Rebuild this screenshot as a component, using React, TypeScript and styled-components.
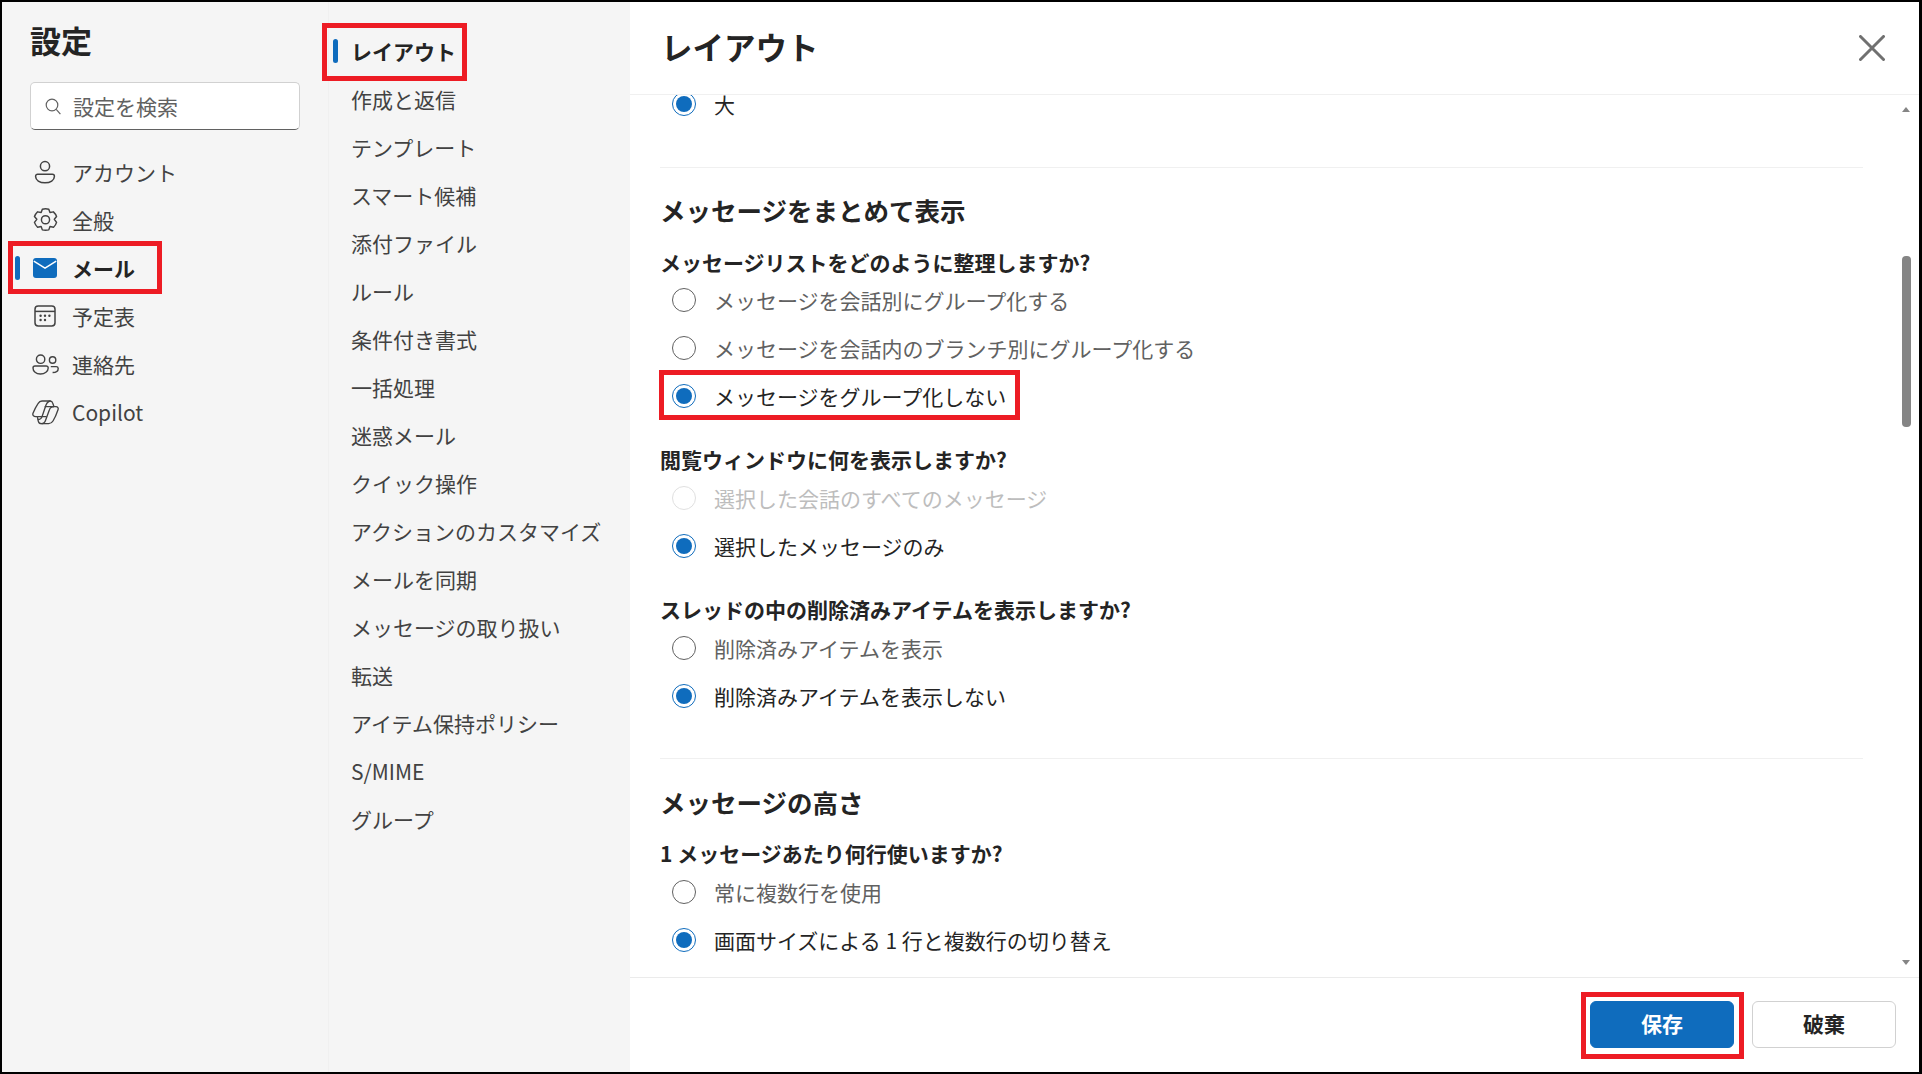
import React from "react";
import styled, { createGlobalStyle } from "styled-components";

const Global = createGlobalStyle`
  html, body { margin: 0; padding: 0; background: #fff; overflow: hidden; }
  * { box-sizing: border-box; }
`;

const Frame = styled.div`
  width: 1922px;
  height: 1074px;
  display: flex;
  border: solid #000;
  border-width: 2px 3px 2px 2px;
  font-family: "Noto Sans CJK JP", "Noto Sans", sans-serif;
  color: #242424;
  background: #fff;
  overflow: hidden;
`;

const SideColumn = styled.nav`
  width: 327px;
  flex: none;
  background: #f5f5f5;
  border-right: 1px solid #f0f0f0;
  padding-top: 18px;
`;

const PageTitle = styled.h1`
  margin: 0 0 0 28px;
  font-size: 31px;
  line-height: 40px;
  font-weight: 700;
`;

const SearchBox = styled.div`
  margin: 22px 0 19px 28px;
  width: 270px;
  height: 48px;
  display: flex;
  align-items: center;
  gap: 12px;
  padding-left: 14px;
  background: #fff;
  border: 1px solid #d1d1d1;
  border-bottom-color: #616161;
  border-radius: 5px;
  color: #616161;
  font-size: 21px;
`;

const NavRow = styled.div<{ $active?: boolean }>`
  position: relative;
  height: 48px;
  display: flex;
  align-items: center;
  padding: 0 0 2px 28px;
  font-size: 21px;
  color: ${(p) => (p.$active ? "#242424" : "#424242")};
  font-weight: ${(p) => (p.$active ? 700 : 400)};
`;

const IconSlot = styled.span`
  width: 30px;
  height: 30px;
  flex: none;
  display: flex;
  align-items: center;
  justify-content: center;
  margin-right: 12px;
`;

const ActiveBar = styled.span<{ $left: number }>`
  position: absolute;
  left: ${(p) => p.$left}px;
  top: 11px;
  width: 5px;
  height: 24px;
  border-radius: 3px;
  background: #0f6cbd;
`;

const Callout = styled.span<{ $l: number; $t: number; $w: number; $h: number }>`
  position: absolute;
  left: ${(p) => p.$l}px;
  top: ${(p) => p.$t}px;
  width: ${(p) => p.$w}px;
  height: ${(p) => p.$h}px;
  border: 5px solid #ed1c24;
  pointer-events: none;
`;

const SubColumn = styled.nav`
  width: 301px;
  flex: none;
  background: #f5f5f5;
  padding-top: 26px;
`;

const SubRow = styled.div<{ $active?: boolean }>`
  position: relative;
  height: 48px;
  display: flex;
  align-items: center;
  padding: 0 0 2px 22px;
  font-size: 21px;
  white-space: nowrap;
  color: ${(p) => (p.$active ? "#242424" : "#424242")};
  font-weight: ${(p) => (p.$active ? 700 : 400)};
`;

const Main = styled.main`
  flex: 1;
  min-width: 0;
  display: flex;
  flex-direction: column;
`;

const Header = styled.header`
  position: relative;
  z-index: 1;
  height: 93px;
  flex: none;
  display: flex;
  align-items: center;
  justify-content: space-between;
  padding: 0 34px 5px 31px;
  background: #fff;
  border-bottom: 1px solid #f0f0f0;
`;

const PanelTitle = styled.h2`
  margin: 0;
  font-size: 31.5px;
  line-height: 40px;
  font-weight: 700;
`;

const CloseButton = styled.button`
  padding: 0;
  margin-top: 5px;
  border: 0;
  background: none;
  width: 26px;
  height: 26px;
  display: flex;
`;

const ScrollRegion = styled.div`
  flex: 1;
  min-height: 0;
  display: flex;
`;

const ScrollContent = styled.div`
  flex: 1;
  min-width: 0;
  padding: 0 39px 0 30px;
`;

const Track = styled.div`
  width: 9px;
  flex: none;
  margin-right: 8px;
  display: flex;
  flex-direction: column;
  padding: 12px 0;
`;

const ArrowUp = styled.span`
  flex: none;
  width: 0;
  height: 0;
  border-left: 4.5px solid transparent;
  border-right: 4.5px solid transparent;
  border-bottom: 5px solid #858585;
`;

const ArrowDown = styled.span`
  flex: none;
  width: 0;
  height: 0;
  margin-top: auto;
  border-left: 4.5px solid transparent;
  border-right: 4.5px solid transparent;
  border-top: 5px solid #858585;
`;

const Thumb = styled.span`
  flex: none;
  margin-top: 144px;
  height: 171px;
  background: #858585;
  border-radius: 4px;
`;

const Divider = styled.hr<{ $top: number }>`
  margin: ${(p) => p.$top}px 0 0;
  border: 0;
  height: 1px;
  background: #f0f0f0;
`;

const SectionTitle = styled.h3<{ $top: number; $bottom: number }>`
  margin: ${(p) => p.$top}px 0 ${(p) => p.$bottom}px;
  font-size: 25.5px;
  line-height: 36px;
  font-weight: 700;
`;

const Question = styled.div<{ $gap?: number; $after?: number }>`
  margin: ${(p) => p.$gap ?? 0}px 0 ${(p) => p.$after ?? 0}px;
  font-size: 21px;
  line-height: 28px;
  font-weight: 700;
`;

type RadioState = "on" | "off" | "disabled";

const RadioRow = styled.div<{ $state: RadioState; $clipped?: boolean }>`
  position: relative;
  height: ${(p) => (p.$clipped ? 18 : 48)}px;
  line-height: ${(p) => (p.$clipped ? 18 : 20)}px;
  display: flex;
  align-items: center;
  gap: 18px;
  padding-left: 12px;
  font-size: 21px;
  color: ${(p) =>
    p.$state === "on" ? "#242424" : p.$state === "off" ? "#616161" : "#bdbdbd"};
`;

const RadioMark = styled.span<{ $state: RadioState }>`
  width: 24px;
  height: 24px;
  flex: none;
  border-radius: 50%;
  display: flex;
  align-items: center;
  justify-content: center;
  background: #fff;
  border: 1.4px solid
    ${(p) =>
      p.$state === "on" ? "#0f6cbd" : p.$state === "off" ? "#616161" : "#e0e0e0"};
  &::after {
    content: "";
    display: ${(p) => (p.$state === "on" ? "block" : "none")};
    width: 16px;
    height: 16px;
    border-radius: 50%;
    background: #0f6cbd;
  }
`;

const Footer = styled.footer`
  height: 95px;
  flex: none;
  display: flex;
  justify-content: flex-end;
  gap: 18px;
  padding: 23px 23px 0 0;
  border-top: 1px solid #ebebeb;
`;

const ActionButton = styled.button<{ $primary?: boolean }>`
  position: relative;
  width: 144px;
  height: 47px;
  padding: 0 0 3px;
  border-radius: 6px;
  font: 700 21px "Noto Sans CJK JP", sans-serif;
  color: ${(p) => (p.$primary ? "#fff" : "#242424")};
  background: ${(p) => (p.$primary ? "#0f6cbd" : "#fff")};
  border: 1px solid ${(p) => (p.$primary ? "#0f6cbd" : "#d1d1d1")};
`;

const Person = () => (
  <svg width="24" height="24" viewBox="0 0 24 24" fill="none" stroke="#424242" strokeWidth="1.5">
    <circle cx="12" cy="6.200" r="4.600" />
    <path d="M4.600 14.200h14.800a2 2 0 0 1 2 2v.4c0 3.600-4 6.200-9.400 6.200s-9.400-2.600-9.400-6.200v-.4a2 2 0 0 1 2-2z" />
  </svg>
);

const Gear = () => (
  <svg width="25" height="26" viewBox="2.500 3 19 18.400" fill="none" stroke="#424242" strokeWidth="1.100" strokeLinejoin="round">
    <path d="M12.200 1.600c.9 0 1.700.1 2.500.3l.9 2.500 2.600-.5c1.100 1 1.900 2.200 2.400 3.600l-1.700 2 1.700 2.400c-.4 1.400-1.200 2.700-2.300 3.700l-2.700-.6-.9 2.600c-.8.2-1.600.3-2.500.3s-1.700-.1-2.400-.3l-.9-2.600-2.700.6a9.400 9.400 0 0 1-2.400-3.700l1.800-2.300-1.800-2.100c.5-1.400 1.400-2.600 2.400-3.600l2.700.5.9-2.500c.7-.2 1.500-.3 2.400-.3z" transform="translate(-.2 2.100)" />
    <circle cx="12" cy="12" r="3.100" />
  </svg>
);

const Mail = () => (
  <svg width="24" height="20" viewBox="0 0 24 20">
    <rect width="24" height="20" rx="3" fill="#0f6cbd" />
    <path d="M.8 3.200 12 10.200l11.200-7" fill="none" stroke="#fff" strokeWidth="1.500" />
  </svg>
);

const Calendar = () => (
  <svg width="22" height="22" viewBox="0 0 22 22" fill="none" stroke="#424242" strokeWidth="1.500">
    <rect x="1" y="1" width="20" height="20" rx="3.200" />
    <path d="M1 6.400h20" />
    <g fill="#424242" stroke="none">
      <circle cx="6.600" cy="10.800" r="1.200" />
      <circle cx="11" cy="10.800" r="1.200" />
      <circle cx="15.400" cy="10.800" r="1.200" />
      <circle cx="6.600" cy="15" r="1.200" />
      <circle cx="11" cy="15" r="1.200" />
    </g>
  </svg>
);

const People = () => (
  <svg width="27" height="21" viewBox="0 0 27 21" fill="none" stroke="#424242" strokeWidth="1.400">
    <circle cx="8.600" cy="5.200" r="4.200" />
    <path d="M3 12h11.200a2 2 0 0 1 2 2c0 3.400-3.400 6-7.800 6S1 17.400 1 14a2 2 0 0 1 2-2z" />
    <circle cx="20.600" cy="6" r="3.200" />
    <path d="M18.800 12.600h5.400a2 2 0 0 1 2 1.800c0 2.400-2.200 4.100-5.600 4.100" />
  </svg>
);

const Copilot = () => (
  <svg width="27" height="25" viewBox="0 0 81 75" fill="none" stroke="#424242" strokeWidth="4" strokeLinejoin="round">
    <path d="M30 3H54c4 0 7 2 8 6l4 11h6c5 0 8 4 6 9-4 12-9 24-15 34-3 5-7 8-13 8H28c-5 0-8-3-9-7l-3-14H11c-6 0-10-5-8-10 4-10 9-20 15-29 3-5 7-8 12-8z" />
    <path d="M56 3c-7 0-11 5-14 12L30 50c-2 7-6 9-13 9" />
    <path d="M28 71c6 0 11-4 13-11L52 30c2-7 6-10 14-10" />
    <path d="M38 20h28M16 50h28" />
  </svg>
);

const SearchGlyph = () => (
  <svg width="16" height="17" viewBox="0 0 16 17" fill="none" stroke="#616161" strokeWidth="1.200">
    <circle cx="7" cy="7" r="5.800" />
    <path d="m11.200 11.400 4.200 4.800" />
  </svg>
);

const CloseGlyph = () => (
  <svg width="26" height="26" viewBox="0 0 26 26" fill="none" stroke="#707070" strokeWidth="3" strokeLinecap="round">
    <path d="m1.500 1.500 23 23M24.500 1.500l-23 23" />
  </svg>
);

const subItems = [
  "作成と返信",
  "テンプレート",
  "スマート候補",
  "添付ファイル",
  "ルール",
  "条件付き書式",
  "一括処理",
  "迷惑メール",
  "クイック操作",
  "アクションのカスタマイズ",
  "メールを同期",
  "メッセージの取り扱い",
  "転送",
  "アイテム保持ポリシー",
  "S/MIME",
  "グループ",
];

const Radio = ({
  state,
  label,
  clipped,
  children,
}: {
  state: RadioState;
  label: string;
  clipped?: boolean;
  children?: React.ReactNode;
}) => (
  <RadioRow $state={state} $clipped={clipped}>
    <RadioMark $state={state} />
    <span>{label}</span>
    {children}
  </RadioRow>
);

export default function App() {
  return (
    <>
      <Global />
      <Frame>
        <SideColumn>
          <PageTitle>設定</PageTitle>
          <SearchBox>
            <SearchGlyph />
            <span>設定を検索</span>
          </SearchBox>
          <NavRow>
            <IconSlot><Person /></IconSlot>アカウント
          </NavRow>
          <NavRow>
            <IconSlot><Gear /></IconSlot>全般
          </NavRow>
          <NavRow $active>
            <ActiveBar $left={13} />
            <IconSlot><Mail /></IconSlot>メール
            <Callout $l={6} $t={-4} $w={154} $h={53} />
          </NavRow>
          <NavRow>
            <IconSlot><Calendar /></IconSlot>予定表
          </NavRow>
          <NavRow>
            <IconSlot><People /></IconSlot>連絡先
          </NavRow>
          <NavRow>
            <IconSlot><Copilot /></IconSlot>Copilot
          </NavRow>
        </SideColumn>
        <SubColumn>
          <SubRow $active>
            <ActiveBar $left={4} />
            レイアウト
            <Callout $l={-7} $t={-5} $w={145} $h={58} />
          </SubRow>
          {subItems.map((item) => (
            <SubRow key={item}>{item}</SubRow>
          ))}
        </SubColumn>
        <Main>
          <Header>
            <PanelTitle>レイアウト</PanelTitle>
            <CloseButton aria-label="閉じる"><CloseGlyph /></CloseButton>
          </Header>
          <ScrollRegion>
            <ScrollContent>
              <Radio state="on" label="大" clipped />
              <Divider $top={54} />
              <SectionTitle $top={24} $bottom={20}>メッセージをまとめて表示</SectionTitle>
              <Question>メッセージリストをどのように整理しますか?</Question>
              <Radio state="off" label="メッセージを会話別にグループ化する" />
              <Radio state="off" label="メッセージを会話内のブランチ別にグループ化する" />
              <Radio state="on" label="メッセージをグループ化しない">
                <Callout $l={-1} $t={-2} $w={361} $h={50} />
              </Radio>
              <Question $gap={25} $after={1}>閲覧ウィンドウに何を表示しますか?</Question>
              <Radio state="disabled" label="選択した会話のすべてのメッセージ" />
              <Radio state="on" label="選択したメッセージのみ" />
              <Question $gap={25} $after={1}>スレッドの中の削除済みアイテムを表示しますか?</Question>
              <Radio state="off" label="削除済みアイテムを表示" />
              <Radio state="on" label="削除済みアイテムを表示しない" />
              <Divider $top={38} />
              <SectionTitle $top={25} $bottom={19}>メッセージの高さ</SectionTitle>
              <Question $after={1}>1 メッセージあたり何行使いますか?</Question>
              <Radio state="off" label="常に複数行を使用" />
              <Radio state="on" label="画面サイズによる 1 行と複数行の切り替え" />
            </ScrollContent>
            <Track>
              <ArrowUp />
              <Thumb />
              <ArrowDown />
            </Track>
          </ScrollRegion>
          <Footer>
            <ActionButton $primary>
              保存
              <Callout $l={-10} $t={-10} $w={163} $h={67} />
            </ActionButton>
            <ActionButton>破棄</ActionButton>
          </Footer>
        </Main>
      </Frame>
    </>
  );
}
